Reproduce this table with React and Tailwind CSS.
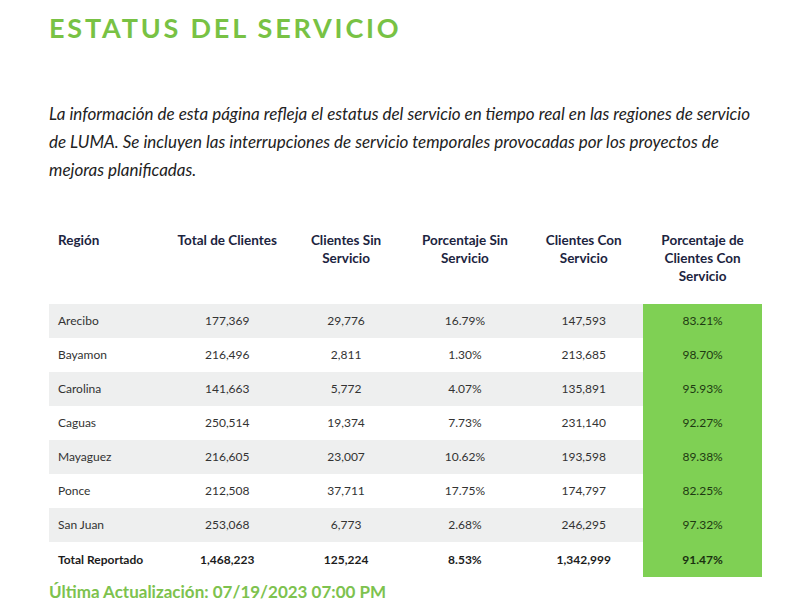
import React from "react";

const rows = [
  ["Arecibo", "177,369", "29,776", "16.79%", "147,593", "83.21%"],
  ["Bayamon", "216,496", "2,811", "1.30%", "213,685", "98.70%"],
  ["Carolina", "141,663", "5,772", "4.07%", "135,891", "95.93%"],
  ["Caguas", "250,514", "19,374", "7.73%", "231,140", "92.27%"],
  ["Mayaguez", "216,605", "23,007", "10.62%", "193,598", "89.38%"],
  ["Ponce", "212,508", "37,711", "17.75%", "174,797", "82.25%"],
  ["San Juan", "253,068", "6,773", "2.68%", "246,295", "97.32%"],
];

const total = ["Total Reportado", "1,468,223", "125,224", "8.53%", "1,342,999", "91.47%"];

export default function App() {
  return (
    <div className="w-[800px] h-[616px] overflow-hidden bg-white px-[49px] pt-[12px] font-['Lato','Noto_Sans',sans-serif]">
      <h1 className="text-[27px] leading-[32px] font-bold tracking-[2.8px] text-[#78c244]">
        ESTATUS DEL SERVICIO
      </h1>

      <p className="mt-[56px] whitespace-nowrap text-[17px] leading-[28px] italic text-[#222]">
        La información de esta página refleja el estatus del servicio en tiempo real en las regiones de servicio
        <br />
        de LUMA. Se incluyen las interrupciones de servicio temporales provocadas por los proyectos de
        <br />
        mejoras planificadas.
      </p>

      <table className="mt-[38px] w-[713px] table-fixed border-collapse text-[#1f2640]">
        <thead>
          <tr className="align-top text-[13.5px] leading-[18px] font-bold text-[#1c2440]">
            <th className="h-[82px] pl-[9px] pt-[9px] text-left">Región</th>
            <th className="pt-[9px] px-1 text-center">Total de Clientes</th>
            <th className="pt-[9px] px-3 text-center">Clientes Sin Servicio</th>
            <th className="pt-[9px] px-2 text-center">Porcentaje Sin Servicio</th>
            <th className="pt-[9px] px-3 text-center">Clientes Con Servicio</th>
            <th className="pt-[9px] px-3 text-center">Porcentaje de Clientes Con Servicio</th>
          </tr>
        </thead>
        <tbody className="text-[12px] text-[#333]">
          {rows.map((r, i) => (
            <tr key={r[0]} className={i % 2 === 0 ? "h-[34px] bg-[#eeefef]" : "h-[34px] bg-white"}>
              <td className="pl-[9px] text-left">{r[0]}</td>
              <td className="text-center">{r[1]}</td>
              <td className="text-center">{r[2]}</td>
              <td className="text-center">{r[3]}</td>
              <td className="text-center">{r[4]}</td>
              <td className="bg-[#7fd054] text-center text-[#1e3a12]">{r[5]}</td>
            </tr>
          ))}
          <tr className="h-[35px] font-bold text-[#1c1c1c]">
            <td className="pl-[9px] text-left">{total[0]}</td>
            <td className="text-center">{total[1]}</td>
            <td className="text-center">{total[2]}</td>
            <td className="text-center">{total[3]}</td>
            <td className="text-center">{total[4]}</td>
            <td className="bg-[#7fd054] text-center text-[#1a3010]">{total[5]}</td>
          </tr>
        </tbody>
      </table>

      <div className="mt-[4px] text-[17px] leading-[22px] font-bold text-[#7dc24e]">
        Última Actualización: 07/19/2023 07:00 PM
      </div>
    </div>
  );
}
